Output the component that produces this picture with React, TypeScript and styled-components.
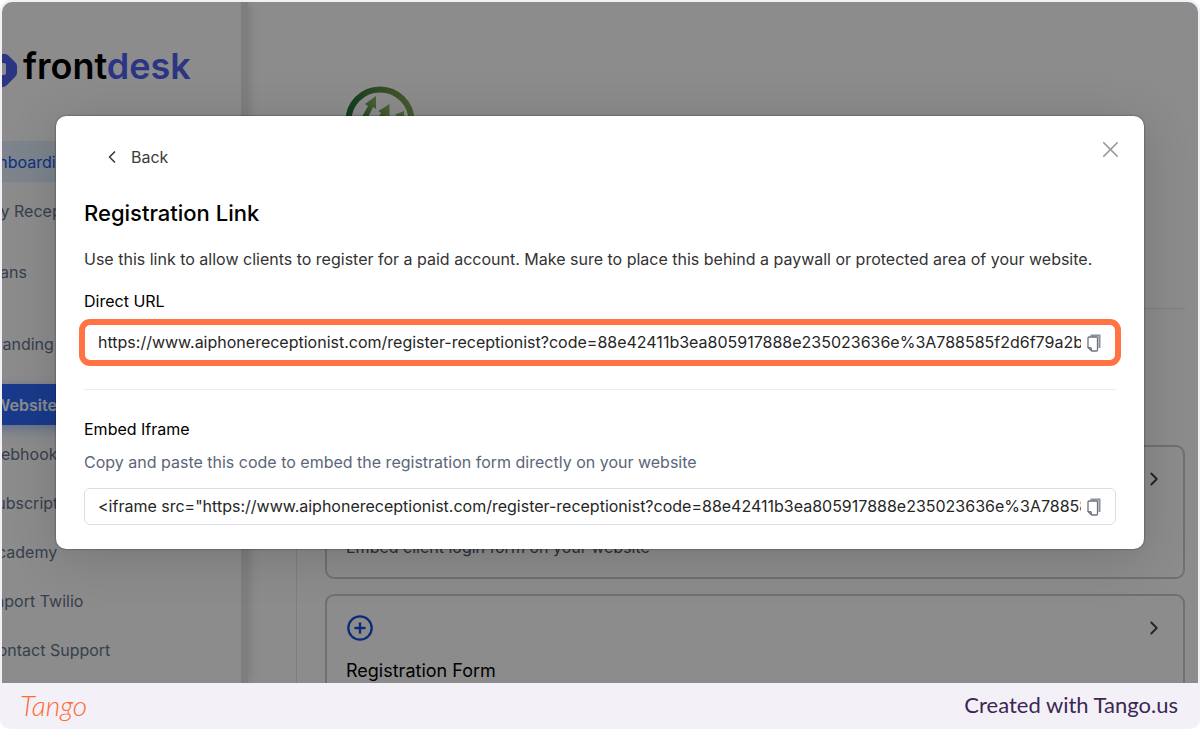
import React from 'react';
import styled, { createGlobalStyle } from 'styled-components';
import { ChevronLeft, ChevronRight, CirclePlus, X } from 'lucide-react';

const GlobalStyle = createGlobalStyle`
  * { box-sizing: border-box; }
  body {
    margin: 0;
    background: #fff;
    font-family: Inter, "Liberation Sans", sans-serif;
    font-size: 16px;
    line-height: 24px;
    color: #262626;
  }
  h1, h2, h3, p { margin: 0; }
  button { font: inherit; background: none; border: 0; padding: 0; cursor: pointer; }
`;

const Frame = styled.div`
  height: 100vh;
  min-height: 640px;
  display: flex;
  flex-direction: column;
  background: #f3f1f7;
  border-radius: 10px;
  overflow: hidden;
`;

const Stage = styled.div`
  position: relative;
  flex: 1 1 0;
  min-height: 0;
  margin: 2px 2px 0;
  display: flex;
  overflow: hidden;
  background: #fff;
  border-radius: 10px 10px 0 0;
`;

const Sidebar = styled.aside`
  flex: none;
  width: 276px;
  margin-left: -30px;
  border-right: 7px solid #e6e6e6;
  box-shadow: 2px 0 10px rgba(0, 0, 0, 0.12);
`;

const Brand = styled.a`
  display: flex;
  align-items: center;
  gap: 6px;
  height: 139px;
  padding: 0 0 12px 12px;
  font-size: 36px;
  line-height: 44px;
  font-weight: 600;
  color: #000;
  text-decoration: none;

  b { font-weight: 600; color: #5062f0; }
`;

const NavGroup = styled.div<{ $top?: number }>`
  display: flex;
  flex-direction: column;
  gap: 8px;
  margin-top: ${(p) => p.$top ?? 0}px;
`;

const NavItem = styled.a<{ $tone?: 'soft' | 'solid' }>`
  height: 41px;
  padding-left: ${(p) => (p.$tone === 'solid' ? 22 : 14)}px;
  display: flex;
  align-items: center;
  white-space: nowrap;
  text-decoration: none;
  font-weight: ${(p) => (p.$tone === 'solid' ? 600 : 400)};
  color: ${(p) => (p.$tone === 'solid' ? '#fff' : p.$tone === 'soft' ? '#1558f0' : '#64748b')};
  background: ${(p) => (p.$tone === 'solid' ? '#2f6bff' : p.$tone === 'soft' ? '#e4f0ff' : 'none')};
  box-shadow: ${(p) => (p.$tone === 'solid' ? '0 4px 14px rgba(47, 107, 255, 0.4)' : 'none')};
`;

const Main = styled.main`
  flex: 1;
  min-width: 0;
  padding: 84px 13px 0 48px;
`;

const Banner = styled.header`
  height: 222px;
  padding-left: 49px;
`;

const Panel = styled.section`
  border-top: 1px solid #e2e4e8;
  border-left: 1px solid #e2e4e8;
  padding: 136px 0 0 28px;
  display: flex;
  flex-direction: column;
  gap: 15px;
`;

const Card = styled.article`
  border: 2px solid #c9ccd6;
  border-radius: 9px;
  padding: 19px 18px 18px 19px;
  color: #4b5563;
`;

const CardTop = styled.div`
  display: flex;
  justify-content: space-between;
  align-items: center;
  height: 26px;
  margin-bottom: 17px;
  color: #374151;
`;

const CardTitle = styled.h3`
  font-size: 18px;
  line-height: 26px;
  font-weight: 400;
  color: #000;
`;

const Overlay = styled.div`
  position: absolute;
  inset: 0;
  display: flex;
  align-items: flex-start;
  padding: 114px 54px 0;
  background: rgba(0, 0, 0, 0.45);
`;

const Modal = styled.section`
  flex: 1;
  min-width: 0;
  padding: 20px 28px 24px;
  background: #fff;
  border-radius: 10px;
  box-shadow: 0 0 2px rgba(0, 0, 0, 0.6), 0 8px 50px rgba(0, 0, 0, 0.16);
`;

const ModalBar = styled.div`
  display: flex;
  justify-content: space-between;
  align-items: center;
  height: 42px;
  padding-left: 18px;
`;

const BackButton = styled.button`
  display: flex;
  align-items: center;
  gap: 9px;
  color: #3c3c3c;
`;

const CloseButton = styled.button`
  display: flex;
  align-self: flex-start;
  margin-right: -8px;
  color: #999;
`;

const Title = styled.h2`
  margin: 19px 0 18px;
  font-size: 22px;
  line-height: 32px;
  font-weight: 500;
  color: #000;
`;

const Description = styled.p`
  color: #333;
`;

const Label = styled.label`
  display: block;
  margin-top: 18px;
  color: #000;
`;

const Field = styled.div<{ $marked?: boolean }>`
  display: flex;
  align-items: center;
  gap: 6px;
  height: 37px;
  padding: 0 14px 0 13px;
  border: 1px solid #dedee2;
  border-radius: 6px;
  margin-top: ${(p) => (p.$marked ? 11 : 14)}px;
  outline: ${(p) => (p.$marked ? '6px solid #ff7442' : 'none')};
  outline-offset: -1px;
`;

const Code = styled.input`
  flex: 1;
  min-width: 0;
  border: 0;
  padding: 0 0 2px;
  outline: 0;
  background: none;
  font: inherit;
  color: #262626;
`;

const CopyButton = styled.button`
  display: flex;
`;

const Divider = styled.hr`
  height: 1px;
  border: 0;
  margin: 28px 0 27px;
  background: #ececee;
`;

const Hint = styled.p`
  margin-top: 9px;
  color: #5b6678;
`;

const Footer = styled.footer`
  flex: none;
  height: 46px;
  padding: 0 22px 2px 20px;
  display: flex;
  justify-content: space-between;
  align-items: center;
  font-family: Lato, sans-serif;
  font-size: 22px;
  color: #3c2753;
`;

const Script = styled.span`
  font-size: 28px;
  font-style: italic;
  font-weight: 300;
  color: #ff6a39;
`;

const CopyIcon = () => (
  <svg width="14" height="18" viewBox="0 0 14 18" fill="none">
    <path d="M3.500 1.500h9v12.500" stroke="#8b909d" strokeWidth="2" />
    <path d="M1 4a1 1 0 0 1 1-1h7.500a1 1 0 0 1 1 1v12a1 1 0 0 1-1 1H5L1 13.500z" stroke="#6b7282" strokeWidth="1.300" />
    <path d="M1 13.500h2.500a1 1 0 0 1 1 1V17z" fill="#8b909d" stroke="#6b7282" />
  </svg>
);

const BrandMark = () => (
  <svg width="33" height="42" viewBox="0 0 33 42">
    <path
      transform="translate(0 8)"
      fill="#5062f0"
      fillRule="evenodd"
      d="M12 1h9q2 0 4 2l6 6q2 2 2 4v7q0 2-2 4l-8 8q-2 2-4 2h-7L0 22V12zM11 10v12h9q2 0 2-2v-8q0-2-2-2z"
    />
  </svg>
);

const ClientLogo = () => (
  <svg width="70" height="70" viewBox="0 0 70 70">
    <defs>
      <linearGradient id="leaf" gradientUnits="userSpaceOnUse" x1="0" y1="0" x2="70" y2="0">
        <stop offset="0" stopColor="#1c6a3c" />
        <stop offset="0.35" stopColor="#4c8540" />
        <stop offset="1" stopColor="#86a456" />
      </linearGradient>
      <linearGradient id="arrows" x1="0" y1="1" x2="0.500" y2="0">
        <stop offset="0.400" stopColor="#4a8240" />
        <stop offset="1" stopColor="#86b05e" />
      </linearGradient>
    </defs>
    <circle cx="35" cy="35" r="31.500" fill="none" stroke="url(#leaf)" strokeWidth="6" />
    <g fill="url(#arrows)">
      <path d="M31 10v13l-3-2L19 40l-6-2 10-18-3-2z" />
      <path d="M44.500 18v13l-3-2L31 46l-5-3 10-16-2.500-2z" />
      <path d="M59 25v12l-3-2L42 52l-4-3 14-19-2-1.500z" />
    </g>
  </svg>
);

const link =
  'https://www.aiphonereceptionist.com/register-receptionist?code=88e42411b3ea805917888e235023636e%3A788585f2d6f79a2b';

export default function App() {
  return (
    <>
      <GlobalStyle />
      <Frame>
        <Stage>
          <Sidebar>
            <Brand href="#">
              <BrandMark />
              <span>front<b>desk</b></span>
            </Brand>
            <nav>
              <NavGroup>
                <NavItem href="#" $tone="soft">Onboarding</NavItem>
                <NavItem href="#">My Receptionist</NavItem>
              </NavGroup>
              <NavGroup $top={20}>
                <NavItem href="#">Plans</NavItem>
              </NavGroup>
              <NavGroup $top={31}>
                <NavItem href="#">Branding</NavItem>
              </NavGroup>
              <NavGroup $top={20}>
                <NavItem href="#" $tone="solid">Website</NavItem>
                <NavItem href="#">Webhooks</NavItem>
                <NavItem href="#">Subscription</NavItem>
                <NavItem href="#">Academy</NavItem>
                <NavItem href="#">Import Twilio</NavItem>
                <NavItem href="#">Contact Support</NavItem>
              </NavGroup>
            </nav>
          </Sidebar>
          <Main>
            <Banner><ClientLogo /></Banner>
            <Panel>
              <Card>
                <CardTop>
                  <CirclePlus size={28} strokeWidth={2} color="#1750e0" />
                  <ChevronRight size={22} />
                </CardTop>
                <CardTitle>Login Form</CardTitle>
                <p>Embed client login form on your website</p>
              </Card>
              <Card>
                <CardTop>
                  <CirclePlus size={28} strokeWidth={2} color="#1750e0" />
                  <ChevronRight size={22} />
                </CardTop>
                <CardTitle>Registration Form</CardTitle>
              </Card>
            </Panel>
          </Main>
          <Overlay>
            <Modal role="dialog" aria-labelledby="dialog-title">
              <ModalBar>
                <BackButton type="button">
                  <ChevronLeft size={20} strokeWidth={2} />
                  Back
                </BackButton>
                <CloseButton type="button" aria-label="Close">
                  <X size={27} strokeWidth={1.5} />
                </CloseButton>
              </ModalBar>
              <Title id="dialog-title">Registration Link</Title>
              <Description>
                Use this link to allow clients to register for a paid account. Make sure to place this behind a paywall or protected area of your website.
              </Description>
              <Label htmlFor="direct-url">Direct URL</Label>
              <Field $marked>
                <Code id="direct-url" readOnly value={link} />
                <CopyButton type="button" aria-label="Copy URL"><CopyIcon /></CopyButton>
              </Field>
              <Divider />
              <Label htmlFor="embed-code">Embed Iframe</Label>
              <Hint>Copy and paste this code to embed the registration form directly on your website</Hint>
              <Field>
                <Code id="embed-code" readOnly value={`<iframe src="${link}"></iframe>`} />
                <CopyButton type="button" aria-label="Copy embed code"><CopyIcon /></CopyButton>
              </Field>
            </Modal>
          </Overlay>
        </Stage>
        <Footer>
          <Script>Tango</Script>
          <span>Created with Tango.us</span>
        </Footer>
      </Frame>
    </>
  );
}
